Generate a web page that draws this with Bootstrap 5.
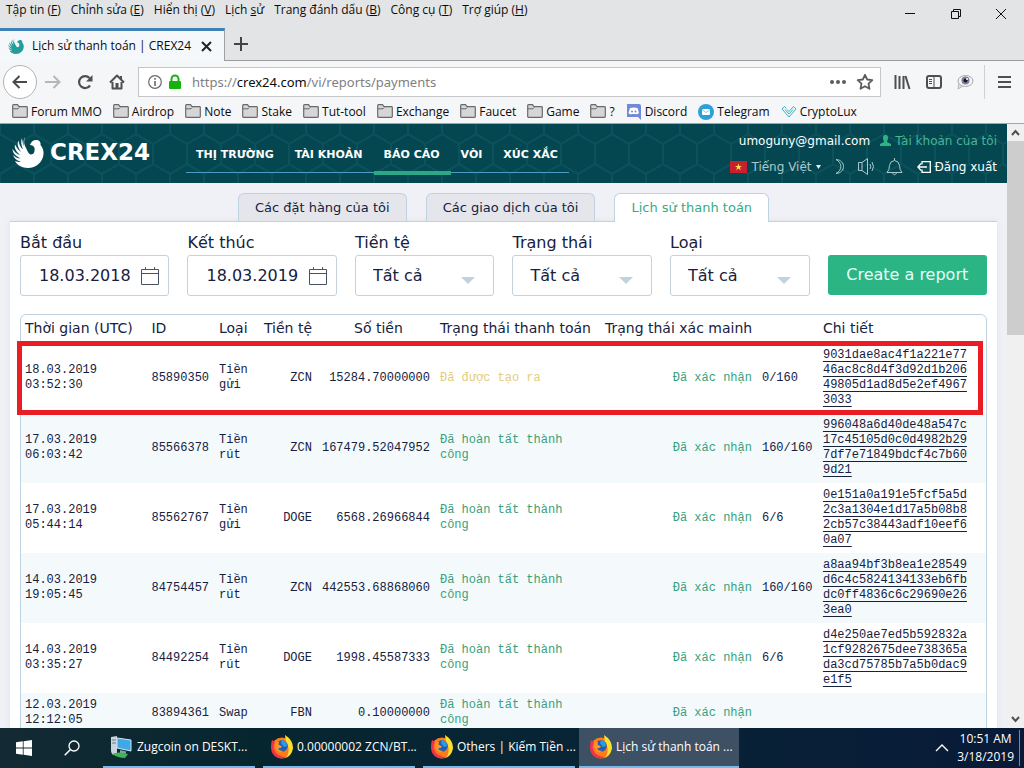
<!DOCTYPE html>
<html lang="vi">
<head>
<meta charset="utf-8">
<meta name="viewport" content="width=device-width, initial-scale=1">
<title>Lịch sử thanh toán | CREX24</title>
<link href="https://cdn.jsdelivr.net/npm/bootstrap@5.3.0/dist/css/bootstrap.min.css" rel="stylesheet">
<style>
  body { height: 100vh; overflow: hidden; font-family: "Open Sans", "Noto Sans", sans-serif; font-size: 12px; line-height: 16px; color: #0c0c0d; background: #f5f6f7; }
  button { font-family: inherit; }
  svg { display: block; flex: none; }
  a { color: inherit; text-decoration: none; }
  .plain { border: 0; background: none; padding: 0; color: inherit; }

  /* window frame */
  .titlebar { background: #e3e4e6; height: 61px; border-bottom: 1px solid #9b9b9f; }
  .menus { gap: 10px; padding: 2px 6px 0; }
  .menus button { white-space: nowrap; }
  .winbtns { gap: 31px; padding: 8px 15px 0 0; }
  .pagetab { width: 225px; height: 33px; margin-bottom: -1px; background: #f5f8fa; border-top: 3px solid #3d81b8; border-right: 1px solid #a0a0a3; padding: 0 12px 0 8px; }
  .tools { height: 41px; padding: 0 13px 0 3px; color: #4f4f52; }
  .back { width: 34px; height: 34px; border: 1px solid #b4b4b6; border-radius: 50%; background: #fff; color: #4a4a4c; }
  .urlbox { height: 30px; margin: 0 13px; border: 1px solid #c6c6c9; background: #fff; padding: 0 6px 0 9px; gap: 6px; }
  .urltext { font-size: 13px; color: #808084; font-family: "Noto Sans", sans-serif; }
  .urltext b { font-weight: 400; color: #0c0c0d; }
  .extras { gap: 15px; padding-right: 10px; height: 34px; border-right: 1px solid #d0d0d3; margin-right: 13px; }
  .bookmarks { height: 22px; padding: 0 12px 2px; gap: 11px; border-bottom: 1px solid #9aa9ae; }
  .bookmarks a { gap: 3px; white-space: nowrap; }

  /* site */
  .site { font-family: "DejaVu Sans", sans-serif; background: #f0f1f7; color: #16213e; }
  .sitehead { height: 59px; color: #fff; background: #044751 url("data:image/svg+xml,%3Csvg xmlns='http://www.w3.org/2000/svg' width='34' height='60'%3E%3Cpath d='M0 0V10L17 20V40L0 50V60M34 0V10L17 20M17 40L34 50V60' fill='none' stroke='%230b525d' stroke-width='2'/%3E%3C/svg%3E"); padding: 0 10px 0 12px; }
  .brand { gap: 6px; font: 700 23px/30px "DejaVu Sans", sans-serif; padding-bottom: 4px; }
  .mainnav { margin: 0 0 0 36px; border-bottom: 1px solid #4b9cc4; font-size: 11px; font-weight: 700; height: 38px; }
  .mainnav a { display: block; padding: 12px 11px 0 10px; height: 38px; white-space: nowrap; }
  .mainnav a.active { border-bottom: 4px solid #2ba887; height: 40px; }
  .userbox { font-size: 12px; line-height: 18px; white-space: nowrap; }
  .userbox > div { gap: 10px; }
  .userbox .soft { color: #a9c9cc; }
  .userbox .mint { color: #48b595; }
  .tabs { gap: 19px; padding-top: 10px; }
  .tabs a { border: 1px solid #bdd3e0; border-bottom: 0; border-radius: 6px 6px 0 0; background: #e5e6ec; height: 28px; padding: 4px 16px; font-size: 13px; line-height: 20px; }
  .tabs a.active { background: #fff; color: #36ab85; height: 29px; margin-bottom: -1px; position: relative; }
  .sheet { margin: 0 10px; background: #fff; border-top: 1px solid #bdd3e0; padding: 9px 10px 0; box-shadow: 0 0 6px #dfe1ea; }
  .filters { gap: 18px; }
  .filters > * { flex: 140 1 0; min-width: 0; }
  .filters .wide { flex-grow: 150; }
  .filters label { display: block; font-size: 16px; line-height: 24px; white-space: nowrap; }
  .filters .form-select, .filters .form-control { height: 41px; border: 1px solid #c3d2dc; border-radius: 3px; font-size: 16px; color: #16213e; background-color: #fff; padding: 0 0 0 18px; }
  .filters .form-select { background-image: url("data:image/svg+xml,%3Csvg xmlns='http://www.w3.org/2000/svg' viewBox='0 0 14 7'%3E%3Cpath d='M0 0H14L7 7Z' fill='%23bfd3df'/%3E%3C/svg%3E"); background-size: 14px 7px; background-position: right 18px top 21px; padding-left: 17px; }
  .filters svg { position: absolute; right: 10px; bottom: 11px; }
  .filters .btn { flex-grow: 160; height: 40px; border: 0; border-radius: 3px; background: #2bb585; color: #e6fff6; font-size: 16px; padding: 0; margin-bottom: 1px; white-space: nowrap; }
  .gridbox { margin-top: 18px; border: 1px solid #c0d2dd; border-radius: 6px 6px 0 0; }
  .pay { table-layout: fixed; margin: 0; color: #16213e; border-collapse: collapse; width: 100%; }
  .pay th { font-size: 14px; font-weight: 400; line-height: 16px; padding: 5px 0 7px 5px; white-space: nowrap; }
  .pay td { font: 12px/15px "Liberation Mono", monospace; padding: 5px; vertical-align: middle; }
  .pay th:first-child, .pay td:first-child { padding-left: 4px; }
  .pay tbody tr:nth-child(even) { background: #f4fafc; }
  .pay .ok { color: #38a17c; }
  .pay .wait { color: #e3cd7c; }
  .pay td a { display: block; width: 145px; word-break: break-all; text-decoration: underline; text-underline-offset: 3px; }
  .marker { position: absolute; left: -4px; right: 3px; top: 26px; height: 74px; border: 5px solid #ea1c24; }
  .scroller { width: 17px; background: #f0f0f0; }
  .scroller .thumb { height: 194px; background: #cdcdcd; }

  /* desktop bar */
  .taskbar { height: 40px; color: #fff; background: linear-gradient(90deg, #132a33, #06262f 25%, #082436 60%, #081a38); }
  .search { margin: 0 23px 0 32px; }
  .task { width: 152px; height: 40px; border-bottom: 2px solid #76b9ed; padding: 0 6px 0 7px; gap: 3px; color: #fff; white-space: nowrap; }
  .task.active { width: 160px; background: #3d5064; padding-left: 10px; }
  .clock { line-height: 18px; padding-right: 5px; margin-right: 4px; border-right: 1px solid #7c8793; white-space: nowrap; }
</style>
</head>
<body class="d-flex flex-column">
<svg width="0" height="0" class="position-absolute" aria-hidden="true">
  <defs>
    <symbol id="folder" viewBox="0 0 16 14"><path d="M.7 12.500V1.500Q.7.7 1.500.7H5.500L7 2.700H14.500Q15.300 2.700 15.300 3.500V12.500Q15.300 13.300 14.500 13.300H1.500Q.7 13.300.7 12.500Z" fill="#d6d6d8" stroke="#69696c" stroke-width="1.200"/><path d="M1 4.800H6L7.200 3.600" fill="none" stroke="#69696c"/></symbol>
    <symbol id="bird" viewBox="0 0 32 32"><path d="M13 1C11.500 5 12 9 14 12C15.500 15 16.500 18 19 18.500C22 18.500 23 15 22.500 12C22 10 20 9 18 9C19 5.500 22 3.500 25 4C28 4.500 29 7 28.500 9C31 12 31.800 15 31.500 18C31 26 24 32 16 32C10 32 5 29 3 25C5 26 7 26.200 9 26C5 24.500 2 22.500 1 19C3.500 21.500 6 22.500 8.500 22.500C4 20 .5 17.500 .5 13C3 16.500 5 18 8 19C4.500 15.500 2 12.500 3 8.500C5 12.500 6.500 14 9 16C6.500 12 4.800 9 6.300 4.500C7.500 9 8.500 11 11 13.500C9.200 9 8.500 5 10 2C10.300 6 11 8 12 10C11.200 6.500 11.500 3.500 13 1Z" fill="currentColor"/></symbol>
    <symbol id="calendar" viewBox="0 0 18 18"><path d="M.5 2.500H17.500V17.500H.5ZM.5 6.500H17.500M4.500 0V3M13.500 0V3" fill="none" stroke="#4a5268"/></symbol>
    <symbol id="fox" viewBox="0 0 24 24"><circle cx="12" cy="13" r="10.500" fill="#ff7a18"/><path d="M2 5L5 7Q2 13 6 18Q10 22 16 22Q13 24 9 23Q1 21 1 12Q1 8 2 5Z" fill="#f2304f"/><path d="M15 0Q23 5 23 13Q22 20 16 23Q20 17 18 11Q15 6 15 0Z" fill="#ffdf2e"/><circle cx="12" cy="11" r="5.800" fill="#1d5fb8"/><path d="M12 5Q17 6 17 11L14 12L11 8Z" fill="#2b9be6"/><path d="M5 7Q8 6 9 7L8.500 9.500L12 11.500Q11 13.500 8 13.500Q10 16.500 13 15.500Q12 18 9 17Q5 15 5 7Z" fill="#ff9524"/></symbol>
  </defs>
</svg>

<header class="titlebar d-flex justify-content-between flex-shrink-0">
  <div class="d-flex flex-column justify-content-between">
    <nav class="menus d-flex">
      <button class="plain">Tập tin (<u>F</u>)</button><button class="plain">Chỉnh sửa (<u>E</u>)</button><button class="plain">Hiển thị (<u>V</u>)</button><button class="plain">Lịch <u>s</u>ử</button><button class="plain">Trang đánh dấu (<u>B</u>)</button><button class="plain">Công cụ (<u>T</u>)</button><button class="plain">Trợ giúp (<u>H</u>)</button>
    </nav>
    <div class="d-flex align-items-center">
      <div class="pagetab d-flex align-items-center">
        <svg width="16" height="16" style="color:#239c9c"><use href="#bird"/></svg>
        <span class="ms-2 me-auto">Lịch sử thanh toán | CREX24</span>
        <button class="plain" aria-label="Đóng tab"><svg width="11" height="11"><path d="M1 1L10 10M10 1L1 10" stroke="#222" stroke-width="2"/></svg></button>
      </div>
      <button class="plain ms-2" aria-label="Tab mới"><svg width="16" height="16"><path d="M8 1V15M1 8H15" stroke="#444" stroke-width="2"/></svg></button>
    </div>
  </div>
  <div class="winbtns d-flex align-items-start">
    <button class="plain" aria-label="Thu nhỏ"><svg width="15" height="12"><path d="M3 5.500H13" stroke="#111"/></svg></button>
    <button class="plain" aria-label="Phục hồi"><svg width="15" height="12"><path d="M3.500 3.500H10.500V10.500H3.500ZM5.500 3V1.500H12.500V8.500H11" fill="none" stroke="#111"/></svg></button>
    <button class="plain" aria-label="Đóng"><svg width="15" height="12"><path d="M2 1L12 11M12 1L2 11" stroke="#111"/></svg></button>
  </div>
</header>

<div class="tools d-flex align-items-center flex-shrink-0">
  <button class="back d-flex align-items-center justify-content-center p-0" aria-label="Quay lại"><svg width="16" height="14"><path d="M15 7H2M7.500 1L1.500 7L7.500 13" fill="none" stroke="currentColor" stroke-width="2"/></svg></button>
  <button class="plain ms-2" aria-label="Tiến"><svg width="16" height="14"><path d="M0 7H14M8.500 1L14.500 7L8.500 13" fill="none" stroke="#b6b6b8" stroke-width="2"/></svg></button>
  <button class="plain ms-3" aria-label="Tải lại"><svg width="16" height="16"><path d="M12.500 4A6 6 0 1 0 13 11.500" fill="none" stroke="currentColor" stroke-width="2.200"/><path d="M15.500 1V7.500H9Z" fill="currentColor"/></svg></button>
  <button class="plain ms-3" aria-label="Trang chủ"><svg width="16" height="16"><path d="M1 8.500L8 1.500L15 8.500M3.500 8V14.500H12.500V8M12 2V5" fill="none" stroke="currentColor" stroke-width="2" stroke-linejoin="round"/><path d="M6.500 9H9.500V15H6.500Z" fill="currentColor"/></svg></button>
  <div class="urlbox d-flex align-items-center flex-grow-1">
    <svg width="14" height="14"><circle cx="7" cy="7" r="6.300" fill="none" stroke="#6a6a6d" stroke-width="1.200"/><path d="M7 6V11M7 3V4.800" stroke="#6a6a6d" stroke-width="1.600"/></svg>
    <svg width="14" height="16"><path d="M3.500 8V5A3.500 3.500 0 0 1 10.500 5V8" fill="none" stroke="#16b30e" stroke-width="2"/><rect x="1" y="7" width="12" height="8" rx="1" fill="#16b30e"/></svg>
    <span class="urltext ms-1 me-auto">https://<b>crex24.com</b>/vi/reports/payments</span>
    <svg width="16" height="16" class="me-1"><g fill="#5c5c5f"><circle cx="2" cy="8" r="2"/><circle cx="8" cy="8" r="2"/><circle cx="14" cy="8" r="2"/></g></svg>
    <svg width="18" height="18"><path d="M9 1.800L11.200 6.500L16.300 7.100L12.500 10.600L13.500 15.800L9 13.200L4.500 15.800L5.500 10.600L1.700 7.100L6.800 6.500Z" fill="none" stroke="#5c5c5f" stroke-width="1.800" stroke-linejoin="round"/></svg>
  </div>
  <div class="extras d-flex align-items-center">
    <svg width="17" height="16"><path d="M1.500 1V15M5.500 2V15M9.500 2V15M11.500 2L15.500 15" stroke="currentColor" stroke-width="2"/></svg>
    <svg width="16" height="14"><rect x="1" y="1" width="14" height="12" rx="2" fill="none" stroke="currentColor" stroke-width="2"/><path d="M8 1V13M3 4.500H6M3 6.500H6M3 8.500H6" stroke="currentColor"/></svg>
    <svg width="17" height="16"><path d="M2 9L1 15L6 12" fill="#e5e5e8" stroke="#b4b4b8"/><ellipse cx="8.500" cy="7" rx="7.500" ry="5.500" fill="#f4f4f6" stroke="#a9a9ae"/><circle cx="8.500" cy="6.500" r="4" fill="#7b7f96"/><circle cx="8.500" cy="6.500" r="2" fill="#17171f"/><circle cx="10" cy="5" r="1" fill="#fff"/></svg>
  </div>
  <button class="plain" aria-label="Menu"><svg width="13" height="14"><path d="M0 2H13M0 7H13M0 12H13" stroke="currentColor" stroke-width="2"/></svg></button>
</div>

<nav class="bookmarks d-flex align-items-center flex-shrink-0">
  <a href="#" class="d-flex"><svg width="16" height="14"><use href="#folder"/></svg>Forum MMO</a>
  <a href="#" class="d-flex"><svg width="16" height="14"><use href="#folder"/></svg>Airdrop</a>
  <a href="#" class="d-flex"><svg width="16" height="14"><use href="#folder"/></svg>Note</a>
  <a href="#" class="d-flex"><svg width="16" height="14"><use href="#folder"/></svg>Stake</a>
  <a href="#" class="d-flex"><svg width="16" height="14"><use href="#folder"/></svg>Tut-tool</a>
  <a href="#" class="d-flex"><svg width="16" height="14"><use href="#folder"/></svg>Exchange</a>
  <a href="#" class="d-flex"><svg width="16" height="14"><use href="#folder"/></svg>Faucet</a>
  <a href="#" class="d-flex"><svg width="16" height="14"><use href="#folder"/></svg>Game</a>
  <a href="#" class="d-flex"><svg width="16" height="14"><use href="#folder"/></svg>?</a>
  <a href="#" class="d-flex"><svg width="16" height="16"><path d="M1 0H13Q15 0 15 2V16L12 13H1Z" fill="#7289da"/><path d="M4 4Q8 3 11.500 4L13 9Q11 11 10 10H6Q4 11 2.500 9Z" fill="#fff"/><circle cx="6" cy="7.500" r="1" fill="#7289da"/><circle cx="9.500" cy="7.500" r="1" fill="#7289da"/></svg>Discord</a>
  <a href="#" class="d-flex"><svg width="16" height="16"><circle cx="8" cy="8" r="8" fill="#2f9fd8"/><rect x="4" y="5" width="8" height="6" rx="1" fill="#fff"/><path d="M4 5.500L8 8.500L12 5.500" fill="none" stroke="#8cc9ea"/></svg>Telegram</a>
  <a href="#" class="d-flex"><svg width="16" height="16"><path d="M5.500 4.500L3.500 2.500L1 5L8 13L15 5L12.500 2.500L8 7.500L6 5.500M4 5.500L8 10L12 5.500" fill="none" stroke="#36b3c6"/></svg>CryptoLux</a>
</nav>

<div class="d-flex flex-grow-1 overflow-hidden">
<main class="site flex-grow-1 overflow-hidden">
  <div class="sitehead d-flex align-items-center">
    <a href="#" class="brand d-flex align-items-center"><svg width="32" height="32"><use href="#bird"/></svg>CREX24</a>
    <ul class="mainnav list-unstyled d-flex">
      <li><a href="#">THỊ TRƯỜNG</a></li><li><a href="#">TÀI KHOẢN</a></li><li><a href="#" class="active">BÁO CÁO</a></li><li><a href="#">VÒI</a></li><li><a href="#">XÚC XẮC</a></li>
    </ul>
    <div class="userbox ms-auto">
      <div class="d-flex justify-content-end mb-2">
        <span>umoguny@gmail.com</span>
        <a href="#" class="mint d-flex align-items-center gap-1"><svg width="11" height="11"><path d="M5.500 0C8 0 8 2 8 3C8 5 7 5.500 7 7L11 9V11H0V9L4 7C4 5.500 3 5 3 3C3 2 3 0 5.500 0Z" fill="#2bb585"/></svg>Tài khoản của tôi</a>
      </div>
      <div class="d-flex justify-content-end align-items-center">
        <button class="plain soft d-flex align-items-center gap-1"><svg width="17" height="12"><path d="M0 0H17V12H0Z" fill="#c8202f"/><path d="M8.500 2.500L9.400 5H12L9.900 6.600L10.700 9.200L8.500 7.600L6.300 9.200L7.100 6.600L5 5H7.600Z" fill="#f9e04b"/></svg>Tiếng Việt <svg width="5" height="4"><path d="M0 0H5L2.500 4Z" fill="#e4f0f0"/></svg></button>
        <svg width="17" height="17"><path d="M5 1.500C15 2 15 15 5 15.500C11.500 12 11.500 5 5 1.500Z" fill="none" stroke="#a9c9cc"/></svg>
        <svg width="18" height="17"><path d="M.5 4.500H4L9.500.5V16.500L4 12.500H.5ZM4 4.500V12.500M12 6Q13.500 8.500 12 11M14 4Q17 8.500 14 13" fill="none" stroke="#a9c9cc"/></svg>
        <svg width="17" height="18"><path d="M1 14.500Q3.500 12 3.500 7.500Q4 3 8.500 2.500Q13 3 13.500 7.500Q13.500 12 16 14.500ZM8.500 0V2.500M6.500 15Q8.500 18.500 10.500 15" fill="none" stroke="#a9c9cc"/></svg>
        <a href="#" class="d-flex align-items-center ms-1 gap-1"><svg width="14" height="12"><path d="M5 3.500V.7H13.300V11.300H5V8.500M10 6H1M4 2.500L.8 6L4 9.500" fill="none" stroke="#fff" stroke-width="1.300"/></svg>Đăng xuất</a>
      </div>
    </div>
  </div>

  <nav class="tabs d-flex justify-content-center">
    <a href="#">Các đặt hàng của tôi</a><a href="#">Các giao dịch của tôi</a><a href="#" class="active">Lịch sử thanh toán</a>
  </nav>

  <section class="sheet">
    <form class="filters d-flex align-items-end">
      <div class="wide position-relative"><label for="from">Bắt đầu</label><input id="from" class="form-control" value="18.03.2018"><svg width="18" height="18"><use href="#calendar"/></svg></div>
      <div class="wide position-relative"><label for="to">Kết thúc</label><input id="to" class="form-control" value="18.03.2019"><svg width="18" height="18"><use href="#calendar"/></svg></div>
      <div><label for="cur">Tiền tệ</label><select id="cur" class="form-select"><option>Tất cả</option></select></div>
      <div><label for="state">Trạng thái</label><select id="state" class="form-select"><option>Tất cả</option></select></div>
      <div><label for="kind">Loại</label><select id="kind" class="form-select"><option>Tất cả</option></select></div>
      <button type="button" class="btn">Create a report</button>
    </form>

    <div class="gridbox position-relative">
      <table class="pay">
        <colgroup><col style="width:13%"><col style="width:7%"><col style="width:4.660%"><col style="width:6.010%"><col style="width:12.230%"><col style="width:17.100%"><col style="width:16.270%"><col style="width:6.320%"><col></colgroup>
        <thead><tr><th>Thời gian (UTC)</th><th>ID</th><th>Loại</th><th>Tiền tệ</th><th class="text-center">Số tiền</th><th>Trạng thái thanh toán</th><th>Trạng thái xác mainh</th><th></th><th>Chi tiết</th></tr></thead>
        <tbody>
          <tr><td>18.03.2019<br>03:52:30</td><td>85890350</td><td>Tiền gửi</td><td class="text-end">ZCN</td><td class="text-end">15284.70000000</td><td class="wait">Đã được tạo ra</td><td class="ok text-end">Đã xác nhận</td><td>0/160</td><td><a href="#">9031dae8ac4f1a221e7746ac8c8d4f3d92d1b20649805d1ad8d5e2ef49673033</a></td></tr>
          <tr><td>17.03.2019<br>06:03:42</td><td>85566378</td><td>Tiền rút</td><td class="text-end">ZCN</td><td class="text-end">167479.52047952</td><td class="ok">Đã hoàn tất thành công</td><td class="ok text-end">Đã xác nhận</td><td>160/160</td><td><a href="#">996048a6d40de48a547c17c45105d0c0d4982b297df7e71849bdcf4c7b609d21</a></td></tr>
          <tr><td>17.03.2019<br>05:44:14</td><td>85562767</td><td>Tiền gửi</td><td class="text-end">DOGE</td><td class="text-end">6568.26966844</td><td class="ok">Đã hoàn tất thành công</td><td class="ok text-end">Đã xác nhận</td><td>6/6</td><td><a href="#">0e151a0a191e5fcf5a5d2c3a1304e1d17a5b08b82cb57c38443adf10eef60a07</a></td></tr>
          <tr><td>14.03.2019<br>19:05:45</td><td>84754457</td><td>Tiền rút</td><td class="text-end">ZCN</td><td class="text-end">442553.68868060</td><td class="ok">Đã hoàn tất thành công</td><td class="ok text-end">Đã xác nhận</td><td>160/160</td><td><a href="#">a8aa94bf3b8ea1e28549d6c4c5824134133eb6fbdc0ff4836c6c29690e263ea0</a></td></tr>
          <tr><td>14.03.2019<br>03:35:27</td><td>84492254</td><td>Tiền rút</td><td class="text-end">DOGE</td><td class="text-end">1998.45587333</td><td class="ok">Đã hoàn tất thành công</td><td class="ok text-end">Đã xác nhận</td><td>6/6</td><td><a href="#">d4e250ae7ed5b592832a1cf9282675dee738365ada3cd75785b7a5b0dac9e1f5</a></td></tr>
          <tr><td>12.03.2019<br>12:12:05</td><td>83894361</td><td>Swap</td><td class="text-end">FBN</td><td class="text-end">0.10000000</td><td class="ok">Đã hoàn tất thành công</td><td class="ok text-end">Đã xác nhận</td><td></td><td></td></tr>
        </tbody>
      </table>
      <div class="marker"></div>
    </div>
  </section>
</main>
<div class="scroller d-flex flex-column align-items-center flex-shrink-0">
  <svg width="17" height="17"><path d="M5 11L8.500 7L12 11" fill="none" stroke="#505050" stroke-width="2"/></svg>
  <div class="thumb w-100"></div>
  <svg width="17" height="17" class="mt-auto"><path d="M5 6L8.500 10L12 6" fill="none" stroke="#505050" stroke-width="2"/></svg>
</div>
</div>

<footer class="taskbar d-flex align-items-center flex-shrink-0">
  <button class="plain ms-3" aria-label="Start"><svg width="16" height="16"><path d="M0 2.300L6.800 1.300V7.600H0ZM7.600 1.200L16 0V7.600H7.600ZM0 8.400H6.800V14.700L0 13.700ZM7.600 8.400H16V16L7.600 14.800Z" fill="#fff"/></svg></button>
  <button class="plain search" aria-label="Tìm kiếm"><svg width="16" height="16"><circle cx="10" cy="6" r="5" fill="none" stroke="#fff" stroke-width="1.300"/><path d="M6.500 9.500L.7 15.300" stroke="#fff" stroke-width="1.500"/></svg></button>
  <div class="d-flex gap-2">
    <button class="plain task d-flex align-items-center"><svg width="24" height="24"><path d="M1 2L7 1V18L3 20Q1 18 1 16Z" fill="#c9d4dc"/><path d="M2 5H6M2 8H6" stroke="#6a7c88"/><path d="M7 3L21 5V16L7 13Z" fill="#3fa9e8" stroke="#cfe6f5"/><path d="M10 15L16 16.500V18.500H10Z" fill="#8d9aa4"/><path d="M2 19Q8 16 18 19L15 23Q8 23 2 19Z" fill="#3fb55a"/></svg>Zugcoin on DESKT...</button>
    <button class="plain task d-flex align-items-center"><svg width="24" height="24"><use href="#fox"/></svg>0.00000002 ZCN/BT...</button>
    <button class="plain task d-flex align-items-center"><svg width="24" height="24"><use href="#fox"/></svg>Others | Kiếm Tiền ...</button>
  </div>
  <button class="plain task active ms-1 d-flex align-items-center"><svg width="24" height="24"><use href="#fox"/></svg>Lịch sử thanh toán ...</button>
  <svg width="14" height="8" class="ms-auto me-2"><path d="M1 7L7 1L13 7" fill="none" stroke="#fff" stroke-width="1.400"/></svg>
  <div class="clock text-center">10:51 AM<br>3/18/2019</div>
</footer>
<script src="https://cdn.jsdelivr.net/npm/bootstrap@5.3.0/dist/js/bootstrap.bundle.min.js"></script>
</body>
</html>
